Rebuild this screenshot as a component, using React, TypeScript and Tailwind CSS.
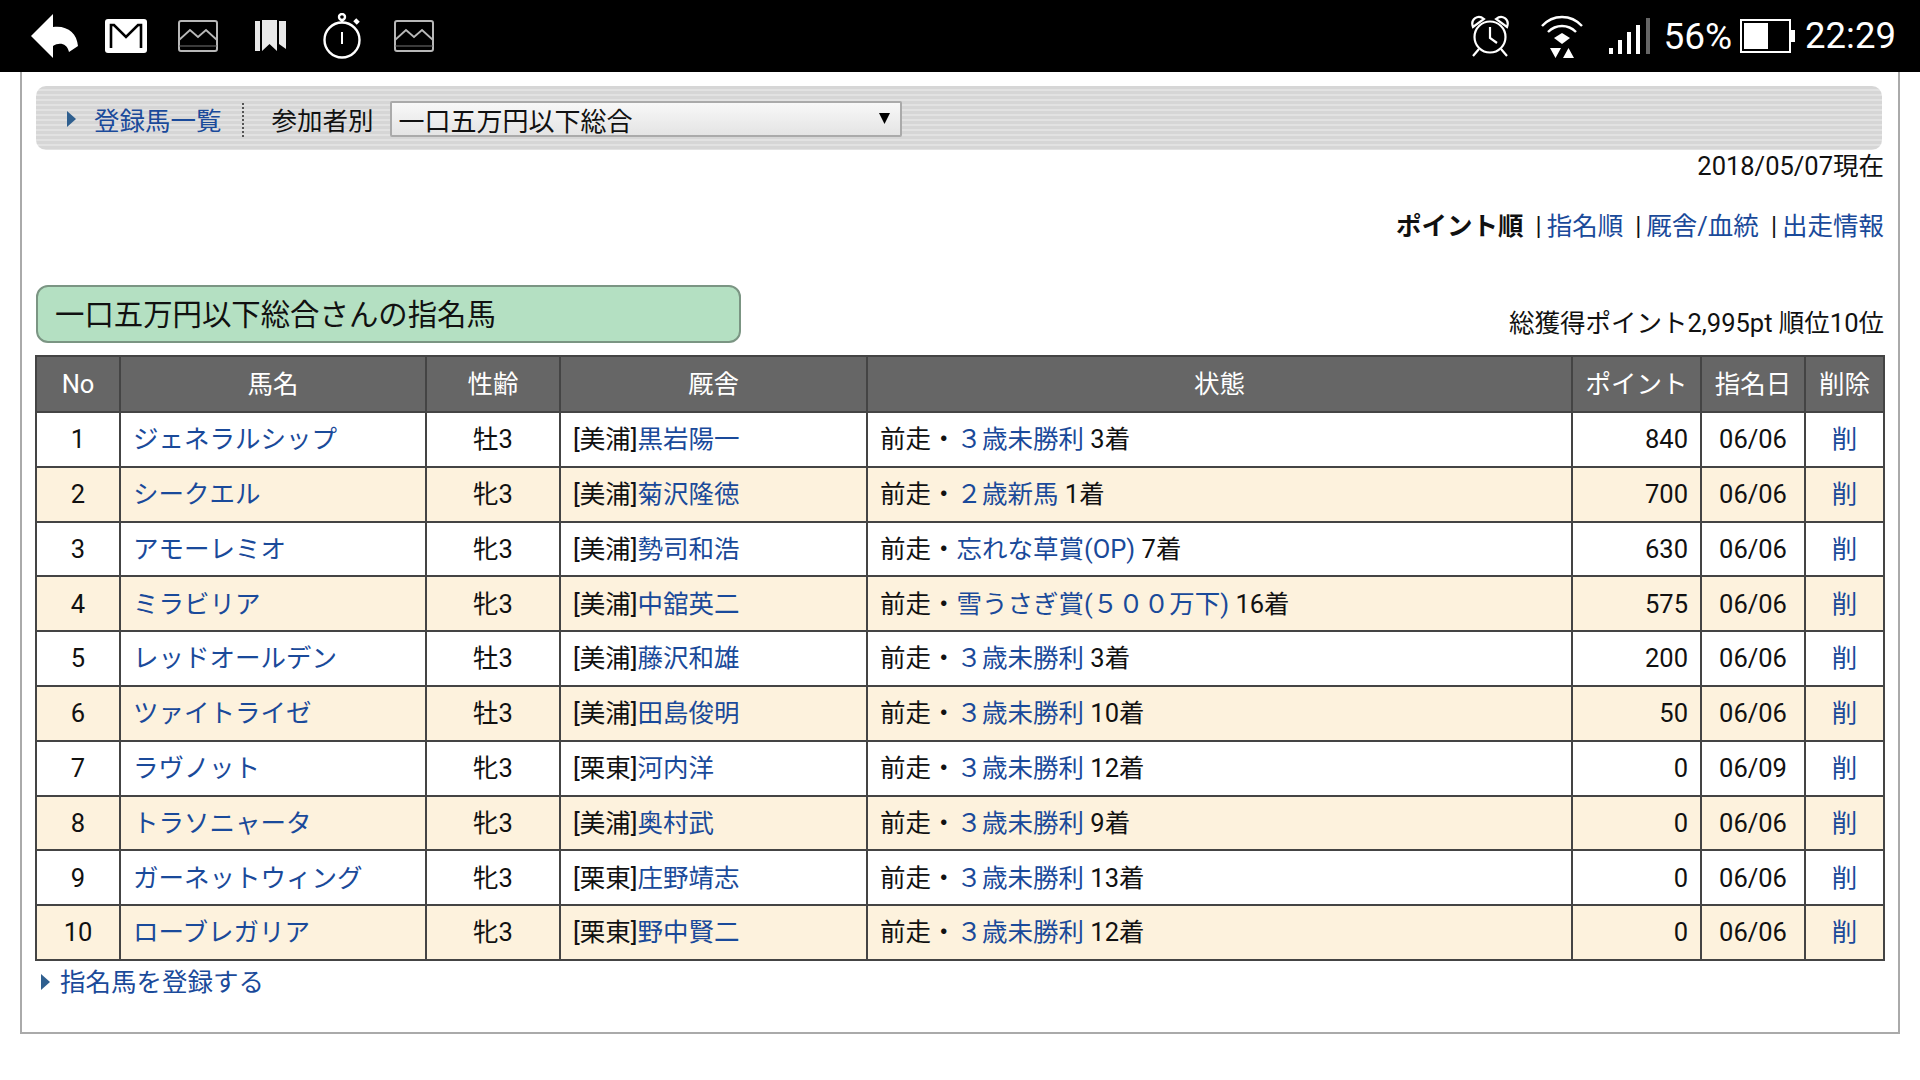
import React from "react";

const rows = [
  ["1", "ジェネラルシップ", "牡3", "[美浦]", "黒岩陽一", "３歳未勝利", " 3着", "840", "06/06"],
  ["2", "シークエル", "牝3", "[美浦]", "菊沢隆徳", "２歳新馬", " 1着", "700", "06/06"],
  ["3", "アモーレミオ", "牝3", "[美浦]", "勢司和浩", "忘れな草賞(OP)", " 7着", "630", "06/06"],
  ["4", "ミラビリア", "牝3", "[美浦]", "中舘英二", "雪うさぎ賞(５００万下)", " 16着", "575", "06/06"],
  ["5", "レッドオールデン", "牡3", "[美浦]", "藤沢和雄", "３歳未勝利", " 3着", "200", "06/06"],
  ["6", "ツァイトライゼ", "牡3", "[美浦]", "田島俊明", "３歳未勝利", " 10着", "50", "06/06"],
  ["7", "ラヴノット", "牝3", "[栗東]", "河内洋", "３歳未勝利", " 12着", "0", "06/09"],
  ["8", "トラソニャータ", "牝3", "[美浦]", "奥村武", "３歳未勝利", " 9着", "0", "06/06"],
  ["9", "ガーネットウィング", "牝3", "[栗東]", "庄野靖志", "３歳未勝利", " 13着", "0", "06/06"],
  ["10", "ローブレガリア", "牝3", "[栗東]", "野中賢二", "３歳未勝利", " 12着", "0", "06/06"],
];

const widths = [84, 306, 134, 307, 705, 129, 104, 79];
const headers = ["No", "馬名", "性齢", "厩舎", "状態", "ポイント", "指名日", "削除"];

function ImageIcon({ cls }: { cls: string }) {
  return (
    <svg width="40" height="32" viewBox="0 0 40 32" className={cls} fill="none" stroke="#b8b8b8" strokeWidth="2">
      <rect x="1" y="1" width="38" height="30" rx="2" />
      <path d="M1 20 L12 10 L20 17 L28 10 L39 20" strokeWidth="1.8" />
      <path d="M1 26 H39" stroke="#777" strokeWidth="1" />
    </svg>
  );
}

function Arrow({ cls }: { cls: string }) {
  return (
    <svg width="9" height="16" viewBox="0 0 9 16" className={cls}>
      <path d="M0 0 L9 8 L0 16 Z" fill="#2f5f8f" />
    </svg>
  );
}

function Sep() {
  return <span className="ml-[12px] text-[25px] leading-[30px] mt-[3px]">|</span>;
}

export default function App() {
  return (
    <div className="w-[1920px] h-[1080px] bg-white overflow-hidden font-['Roboto','Noto_Sans_CJK_JP',sans-serif] text-[25.5px] text-[#111]">
      <div className="h-[72px] bg-black flex items-center justify-between pl-[31px] pr-[24px]">
        <div className="flex items-center">
          <svg width="48" height="44" viewBox="0 0 48 44">
            <path d="M22 0 L0 22 L22 44 L22 32 C28 28 36 29 38 38 L47 32 C46 19 36 11 22 13 Z" fill="#fff" />
          </svg>
          <svg width="42" height="34" viewBox="0 0 42 34" className="ml-[26px]">
            <rect width="42" height="34" rx="3" fill="#fff" />
            <path d="M6 29 V6 H9 L21 18 L33 6 H36 V29" fill="none" stroke="#000" strokeWidth="2.6" />
          </svg>
          <ImageIcon cls="ml-[31px]" />
          <svg width="31" height="32" viewBox="0 0 31 32" className="ml-[37px]" fill="#e8e8e8">
            <path d="M0 1 H5 V31 L0 31 Z" />
            <path d="M7 0 H22 V31 L14.5 24 L7 31 Z" />
            <path d="M24 1 H31 V29 L24 24 Z" />
          </svg>
          <svg width="38" height="46" viewBox="0 0 38 46" className="ml-[37px]" fill="none" stroke="#fff" strokeWidth="2.4">
            <circle cx="19" cy="27" r="17.5" />
            <circle cx="19" cy="4" r="3" />
            <path d="M19 7 V10" />
            <path d="M32 10 L35 7" strokeWidth="5" />
            <path d="M19 19 V31" strokeWidth="2" />
          </svg>
          <ImageIcon cls="ml-[33px]" />
        </div>
        <div className="flex items-center text-white">
          <svg width="40" height="42" viewBox="0 0 40 42" fill="none" stroke="#fff" strokeWidth="2.2">
            <circle cx="20" cy="22" r="15.5" />
            <path d="M20 12 V23 L27 28" />
            <path d="M3 12 C0 4 8 -1 14 4 Z" />
            <path d="M37 12 C40 4 32 -1 26 4 Z" />
            <path d="M9 34 L3 41 M31 34 L37 41" />
          </svg>
          <svg width="42" height="43" viewBox="0 0 42 43" className="ml-[31px]" fill="none" stroke="#fff" strokeWidth="2.4">
            <path d="M1 11 C12 -1 30 -1 41 11" />
            <path d="M7 17 C15 9 27 9 35 17" />
            <path d="M13 23 L21 18 L29 23 L21 29 Z" fill="#fff" stroke="none" />
            <path d="M9 33 H20 L14.5 43 Z M22 43 H33 L27.5 33 Z" fill="#fff" stroke="none" />
          </svg>
          <svg width="41" height="36" viewBox="0 0 41 36" className="ml-[26px]" fill="#fff">
            <rect x="0" y="30" width="4" height="6" />
            <rect x="9" y="22" width="4" height="14" />
            <rect x="18" y="14" width="4" height="22" />
            <rect x="27" y="7" width="4" height="29" />
            <rect x="37" y="0" width="4" height="36" fill="#666" />
          </svg>
          <span className="ml-[13px] text-[37px] leading-none">56%</span>
          <svg width="55" height="34" viewBox="0 0 55 34" className="ml-[8px]">
            <rect x="1" y="1" width="49" height="32" fill="none" stroke="#fff" strokeWidth="2" />
            <rect x="4" y="4" width="24" height="26" fill="#fff" />
            <rect x="51" y="11" width="4" height="12" fill="#fff" />
          </svg>
          <span className="ml-[10px] text-[36.5px] leading-none">22:29</span>
        </div>
      </div>

      <div className="mx-5 w-[1880px] h-[962px] border-x-2 border-b-2 border-[#aaa] pt-[14px] px-[14px]">
        <div className="h-[64px] mr-[2px] rounded-[10px] flex items-center pl-[31px] bg-[repeating-linear-gradient(180deg,#d6d6d6_0px,#d6d6d6_3px,#e2e2e2_3px,#e2e2e2_5px)]">
          <Arrow cls="mr-[18px] mt-[2px]" />
          <a className="text-[#1a4a9a] mt-[6px]">登録馬一覧</a>
          <div className="ml-[20px] h-[34px] mt-[4px] border-l-2 border-dotted border-[#555]" />
          <span className="ml-[28px] mt-[6px]">参加者別</span>
          <div className="ml-[16px] w-[512px] h-[36px] mt-[2px] rounded-[2px] border-2 border-[#aaa] bg-[linear-gradient(180deg,#f8f8f8,#e4e4e4)] flex items-center justify-between pl-[7px] pr-[10px]">
            <span className="text-[26px] leading-none mt-[6px]">一口五万円以下総合</span>
            <svg width="11" height="11" viewBox="0 0 11 11" className="-mt-[2px]"><path d="M0 0 H11 L5.5 11 Z" fill="#000" /></svg>
          </div>
        </div>

        <div className="text-right text-[25.5px] leading-[30px] mt-[1px]">2018/05/07現在</div>

        <div className="flex justify-end items-center mt-[28px] leading-[30px]">
          <b className="font-bold">ポイント順</b>
          <Sep />
          <a className="ml-[5px] text-[#1a4a9a]">指名順</a>
          <Sep />
          <a className="ml-[5px] text-[#1a4a9a]">厩舎/血統</a>
          <Sep />
          <a className="ml-[5px] text-[#1a4a9a]">出走情報</a>
        </div>

        <div className="flex justify-between items-end mt-[43px]">
          <div className="w-[705px] h-[58px] rounded-[12px] border-2 border-[#7b9583] bg-[#b4e0c2] flex items-center pl-[17px] text-[29.4px] leading-[40px] text-[#111]">
            <span className="mt-[1px]">一口五万円以下総合さんの指名馬</span>
          </div>
          <div className="leading-[30px] mb-[5px]">総獲得ポイント2,995pt 順位10位</div>
        </div>

        <table className="mt-[12px] -ml-[1px] w-[1848px] table-fixed border-collapse">
          <colgroup>
            {widths.map((w, i) => (
              <col key={i} style={{ width: w }} />
            ))}
          </colgroup>
          <thead>
            <tr className="h-[56px] bg-[#666] text-white">
              {headers.map((h) => (
                <th key={h} className="border-2 border-[#444] font-normal p-0">{h}</th>
              ))}
            </tr>
          </thead>
          <tbody>
            {rows.map((r, i) => (
              <tr key={r[0]} className={i % 2 ? "h-[54.8px] bg-[#fdf2dd]" : "h-[54.8px] bg-white"}>
                <td className="border-2 border-[#444] text-center p-0">{r[0]}</td>
                <td className="border-2 border-[#444] pl-[12px] p-0 text-[#1a4a9a]">{r[1]}</td>
                <td className="border-2 border-[#444] text-center p-0">{r[2]}</td>
                <td className="border-2 border-[#444] pl-[12px] p-0">
                  {r[3]}<a className="text-[#1a4a9a]">{r[4]}</a>
                </td>
                <td className="border-2 border-[#444] pl-[12px] p-0 whitespace-pre">
                  前走・<a className="text-[#1a4a9a]">{r[5]}</a>{r[6]}
                </td>
                <td className="border-2 border-[#444] text-right pr-[12px] p-0">{r[7]}</td>
                <td className="border-2 border-[#444] text-center p-0">{r[8]}</td>
                <td className="border-2 border-[#444] text-center p-0 text-[#1a4a9a]">削</td>
              </tr>
            ))}
          </tbody>
        </table>

        <div className="flex items-center mt-[5px] pl-[5px] leading-[32px] text-[#1a4a9a]">
          <Arrow cls="mr-[10px]" />
          指名馬を登録する
        </div>
      </div>
    </div>
  );
}
